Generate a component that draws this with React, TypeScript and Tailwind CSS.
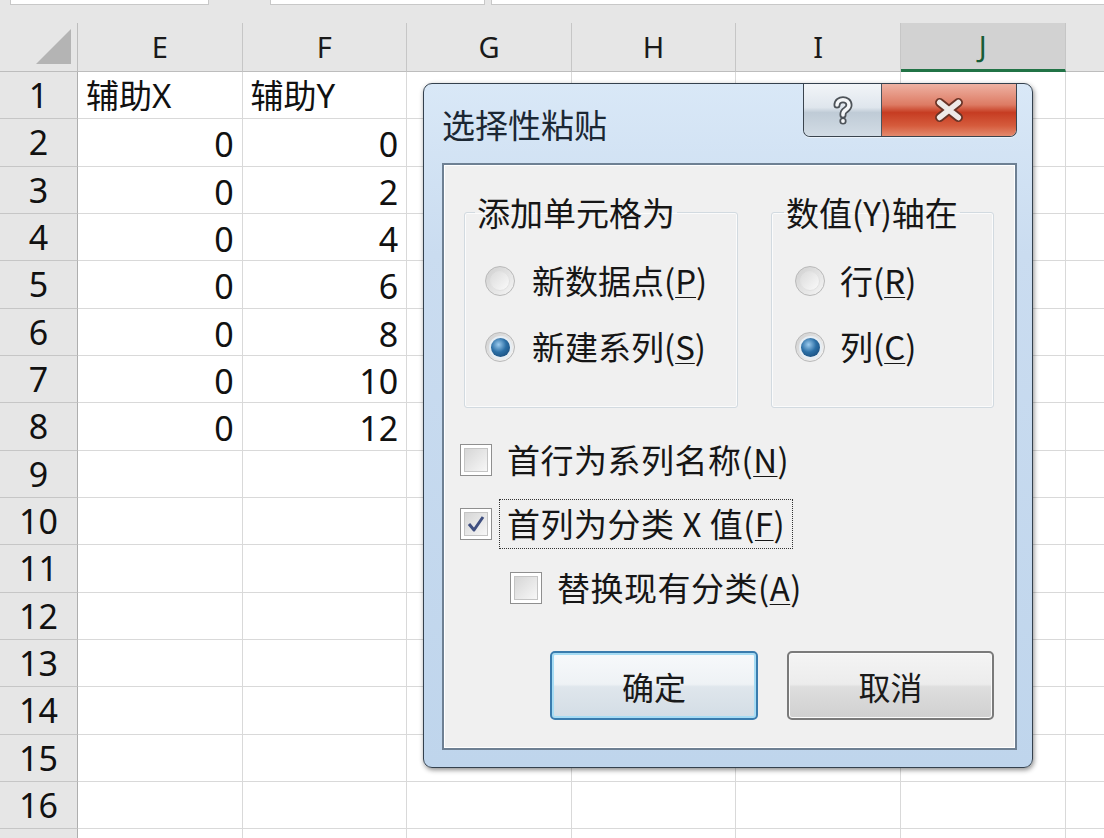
import * as React from "react"

const COLS = ["E", "F", "G", "H", "I", "J"]
const DATA: [string, string][] = [
  ["辅助X", "辅助Y"],
  ["0", "0"],
  ["0", "2"],
  ["0", "4"],
  ["0", "6"],
  ["0", "8"],
  ["0", "10"],
  ["0", "12"],
]

function TopStrip() {
  return (
    <div className="h-[23px] bg-[#e6e6e6] flex items-start">
      <div className="ml-[10px] w-[199px] h-[5px] bg-white border-x border-b border-[#c8c8c8]" />
      <div className="ml-[61px] w-[215px] h-[5px] bg-white border-x border-b border-[#c8c8c8]" />
      <div className="ml-[6px] flex-1 h-[5px] bg-white border-l border-b border-[#c8c8c8]" />
    </div>
  )
}

function ColumnHeader() {
  return (
    <div className="h-[49px] flex bg-[#e6e6e6]">
      <div className="w-[78px] shrink-0 border-r border-b border-[#bdbdbd] flex items-end justify-end pr-[5px] pb-[6px]">
        <svg width="36" height="36" viewBox="0 0 36 36">
          <polygon points="0,35 35,35 35,0" fill="#b4b4b4" />
        </svg>
      </div>
      {COLS.map((c) => (
        <div
          key={c}
          className={
            c === "J"
              ? "w-[164.6px] shrink-0 bg-[#d2d2d2] border-r border-[#c6c6c6] border-b-[3px] border-b-[#217346] flex items-center justify-center text-[29px] text-[#185c37]"
              : "w-[164.6px] shrink-0 border-r border-[#c6c6c6] border-b border-b-[#bdbdbd] flex items-center justify-center text-[29px] text-[#1a1a1a]"
          }
        >
          {c}
        </div>
      ))}
      <div className="flex-1 border-b border-[#bdbdbd]" />
    </div>
  )
}

function Row({ n }: { n: number }) {
  const d = DATA[n - 1]
  return (
    <div className="h-[47.33px] flex shrink-0">
      <div className="w-[78px] shrink-0 bg-[#e6e6e6] border-r border-r-[#aeaeae] border-b border-b-[#c6c6c6] flex items-center justify-center text-[34px] text-[#111] leading-none">
        {n <= 16 ? n : ""}
      </div>
      {COLS.map((c, i) => {
        const v = i < 2 && d ? d[i] : ""
        const left = n === 1
        return (
          <div
            key={c}
            className={
              left
                ? "w-[164.6px] shrink-0 bg-white border-r border-b border-[#d9d9d9] flex items-center pl-[8px] text-[33px] text-[#111] leading-none"
                : "w-[164.6px] shrink-0 bg-white border-r border-b border-[#d9d9d9] flex items-center justify-end pr-[8px] pt-[4px] text-[34px] text-[#111] leading-none"
            }
          >
            {v}
          </div>
        )
      })}
      <div className="flex-1 bg-white border-b border-[#d9d9d9]" />
    </div>
  )
}

function TitleButtons() {
  return (
    <div className="flex h-[53px] rounded-b-[7px] overflow-hidden border-x border-b border-[#3a444e] shadow-[0_1px_0_#eaf2fa]">
      <div className="w-[78px] border-r border-[#4a545e] flex items-center justify-center bg-[linear-gradient(180deg,#f2f5f8_0%,#dfe6ed_45%,#bfcbd6_55%,#d2dce5_100%)]">
        <svg width="22" height="30" viewBox="0 0 22 30">
          <path d="M5 10 C5 3 17 3 17 10 C17 15 11 14.5 11 19 V20" fill="none" stroke="#4d5359" strokeWidth="7" strokeLinecap="round" />
          <path d="M5 10 C5 3 17 3 17 10 C17 15 11 14.5 11 19 V20" fill="none" stroke="#f4f6f8" strokeWidth="3.5" strokeLinecap="round" />
          <circle cx="11" cy="26" r="3.6" fill="#4d5359" />
          <circle cx="11" cy="26" r="1.9" fill="#f4f6f8" />
        </svg>
      </div>
      <div className="w-[134px] flex items-center justify-center bg-[linear-gradient(180deg,#eeb2a3_0%,#dd7b64_40%,#c63c22_55%,#d55b3c_80%,#e48a6e_100%)]">
        <svg width="34" height="26" viewBox="0 0 36 28">
          <path d="M8 6 L28 22 M28 6 L8 22" stroke="#6a3326" strokeWidth="10" strokeLinecap="round" />
          <path d="M8 6 L28 22 M28 6 L8 22" stroke="#eeeae8" strokeWidth="6" strokeLinecap="round" />
        </svg>
      </div>
    </div>
  )
}

function Radio({ checked }: { checked?: boolean }) {
  return (
    <div className="w-[30px] h-[30px] shrink-0 rounded-full border border-[#b9b9b9] bg-[linear-gradient(135deg,#cfcfcf,#f6f6f6)] flex items-center justify-center">
      {checked ? (
        <div className="w-[19px] h-[19px] rounded-full bg-[radial-gradient(circle_at_40%_35%,#9ccbee_0%,#2b6fa6_45%,#123f6b_100%)] shadow-[0_0_0_2px_#e6eef5]" />
      ) : (
        <div className="w-[20px] h-[20px] rounded-full bg-[linear-gradient(135deg,#dcdcdc,#fafafa)] border border-[#e2e2e2]" />
      )}
    </div>
  )
}

function Checkbox({ checked }: { checked?: boolean }) {
  return (
    <div className="w-[32px] h-[32px] shrink-0 border border-[#8f8f8f] bg-white p-[3px]">
      <div className="w-full h-full bg-[linear-gradient(135deg,#d6d6d6,#f7f7f7)] border border-[#c4c4c4] flex items-center justify-center">
        {checked && (
          <svg width="20" height="20" viewBox="0 0 20 20">
            <path d="M3 10 L8 16 L17 3" fill="none" stroke="#3f4f80" strokeWidth="3" strokeLinejoin="round" />
          </svg>
        )}
      </div>
    </div>
  )
}

function Acc({ k }: { k: string }) {
  return <u className="underline decoration-1 underline-offset-[3px]">{k}</u>
}

function Dialog() {
  return (
    <div className="absolute left-[423px] top-[83px] w-[610px] h-[685px] rounded-[9px] border border-[#34414e] bg-[linear-gradient(180deg,#d9e8f7_0%,#cadcf0_25%,#bfd5ec_100%)] shadow-[1px_2px_5px_rgba(0,0,0,0.45)] flex flex-col pl-[18px] pr-[15px] pb-[17px] font-['Noto_Sans_CJK_SC','Noto_Sans',sans-serif] text-[#161616]">
      <div className="h-[79px] shrink-0 flex items-start justify-between">
        <div className="pt-[20px] text-[33px] leading-[40px] text-[#1b2733]">选择性粘贴</div>
        <TitleButtons />
      </div>
      <div className="flex-1 flex flex-col border-2 border-[#6e8093] bg-[#f0f0f0] shadow-[inset_0_0_0_1px_#ffffff]">
        <div className="mt-[29px] pl-[20px] flex gap-[33px]">
          <fieldset className="w-[274px] h-[214px] border border-[#d2dae0] rounded-[3px] shadow-[inset_0_0_0_1px_#fbfbfb]">
            <legend className="ml-[10px] px-[2px] text-[33px] leading-[37px]">添加单元格为</legend>
            <div className="mt-[30px] pl-[20px] flex flex-col gap-[26px]">
              <div className="h-[40px] flex items-center gap-[17px] text-[33px]">
                <Radio />
                <span>新数据点(<Acc k="P" />)</span>
              </div>
              <div className="h-[40px] flex items-center gap-[17px] text-[33px]">
                <Radio checked />
                <span>新建系列(<Acc k="S" />)</span>
              </div>
            </div>
          </fieldset>
          <fieldset className="w-[223px] h-[214px] border border-[#d2dae0] rounded-[3px] shadow-[inset_0_0_0_1px_#fbfbfb]">
            <legend className="ml-[12px] px-[2px] text-[33px] leading-[37px]">数值(Y)轴在</legend>
            <div className="mt-[30px] pl-[23px] flex flex-col gap-[26px]">
              <div className="h-[40px] flex items-center gap-[15px] text-[33px]">
                <Radio />
                <span>行(<Acc k="R" />)</span>
              </div>
              <div className="h-[40px] flex items-center gap-[15px] text-[33px]">
                <Radio checked />
                <span>列(<Acc k="C" />)</span>
              </div>
            </div>
          </fieldset>
        </div>

        <div className="mt-[27px] pl-[16px] flex flex-col gap-[14px]">
          <div className="h-[50px] flex items-center">
            <Checkbox />
            <div className="ml-[7px] h-[50px] px-[7px] flex items-center border border-transparent text-[33px] tracking-[0.5px]">
              首行为系列名称(<Acc k="N" />)
            </div>
          </div>
          <div className="h-[50px] flex items-center">
            <Checkbox checked />
            <div className="ml-[7px] h-[50px] px-[7px] flex items-center border border-dotted border-[#333] text-[33px] tracking-[0.5px]">
              首列为分类 X 值(<Acc k="F" />)
            </div>
          </div>
          <div className="h-[50px] pl-[50px] flex items-center">
            <Checkbox />
            <div className="ml-[7px] h-[50px] px-[7px] flex items-center border border-transparent text-[33px] tracking-[0.5px]">
              替换现有分类(<Acc k="A" />)
            </div>
          </div>
        </div>

        <div className="mt-[38px] pr-[21px] flex justify-end gap-[29px]">
          <button className="w-[208px] h-[69px] rounded-[5px] border-2 border-[#3a7cae] shadow-[inset_0_0_0_2px_#a6dcf4] bg-[linear-gradient(180deg,#f7f9fb_0%,#eef2f5_48%,#dfe6ec_52%,#d3dde5_100%)] text-[32px] text-[#1a1a1a] flex items-center justify-center">
            确定
          </button>
          <button className="w-[207px] h-[69px] rounded-[5px] border-2 border-[#7a7a7a] shadow-[inset_0_0_0_1px_#fafafa] bg-[linear-gradient(180deg,#f4f4f4_0%,#ececec_48%,#dedede_52%,#d0d0d0_100%)] text-[32px] text-[#1a1a1a] flex items-center justify-center">
            取消
          </button>
        </div>
      </div>
    </div>
  )
}

export default function App() {
  const rows = Array.from({ length: 17 }, (_, i) => i + 1)
  return (
    <div className="relative w-[1104px] h-[838px] overflow-hidden bg-white font-['Noto_Sans','Noto_Sans_CJK_SC',sans-serif]">
      <TopStrip />
      <ColumnHeader />
      {rows.map((r) => (
        <Row key={r} n={r} />
      ))}
      <Dialog />
    </div>
  )
}
